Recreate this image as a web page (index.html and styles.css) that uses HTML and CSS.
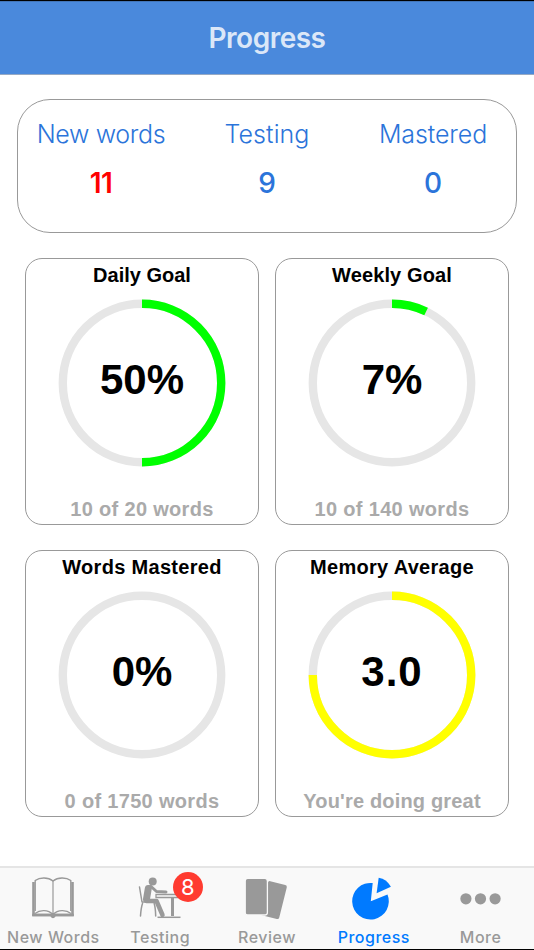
FILE: index.html
```html
<!DOCTYPE html>
<html lang="en">
<head>
<meta charset="utf-8">
<title>Progress</title>
<link rel="stylesheet" href="styles.css">
</head>
<body>
<div class="app">
  <header class="navbar"><h1>Progress</h1></header>
  <main>
    <section class="summary">
      <div class="stat"><span class="stat-label new">New words</span><span class="stat-value alert">11</span></div>
      <div class="stat"><span class="stat-label testing">Testing</span><span class="stat-value">9</span></div>
      <div class="stat"><span class="stat-label mastered">Mastered</span><span class="stat-value">0</span></div>
    </section>
    <section class="goals">
      <article class="card">
        <h2 class="daily">Daily Goal</h2>
        <div class="ring">
          <svg viewBox="0 0 168 168"><circle class="track" cx="84" cy="84" r="79.2"/><circle class="arc green" cx="84" cy="84" r="79.2" pathLength="100" stroke-dasharray="50 100"/></svg>
          <strong>50%</strong>
        </div>
        <p>10 of 20 words</p>
      </article>
      <article class="card">
        <h2 class="weekly">Weekly Goal</h2>
        <div class="ring">
          <svg viewBox="0 0 168 168"><circle class="track" cx="84" cy="84" r="79.2"/><circle class="arc green" cx="84" cy="84" r="79.2" pathLength="100" stroke-dasharray="7.1 100"/></svg>
          <strong>7%</strong>
        </div>
        <p>10 of 140 words</p>
      </article>
      <article class="card">
        <h2>Words Mastered</h2>
        <div class="ring">
          <svg viewBox="0 0 168 168"><circle class="track" cx="84" cy="84" r="79.2"/></svg>
          <strong>0%</strong>
        </div>
        <p>0 of 1750 words</p>
      </article>
      <article class="card">
        <h2>Memory Average</h2>
        <div class="ring">
          <svg viewBox="0 0 168 168"><circle class="track" cx="84" cy="84" r="79.2"/><circle class="arc yellow" cx="84" cy="84" r="79.2" pathLength="100" stroke-dasharray="75 100"/></svg>
          <strong class="decimal">3.0</strong>
        </div>
        <p class="great">You're doing great</p>
      </article>
    </section>
  </main>
  <nav class="tabs">
    <a class="tab">
      <svg viewBox="0 0 48 48"><path d="M4.500 7V40H43.500V7" fill="none" stroke="currentColor" stroke-width="2.600"/><path d="M6.200 36V5.500C11 2 19 2 24 6C29 2 37 2 41.800 5.500V36" fill="#f9f9f9" stroke="currentColor" stroke-width="1.400"/><path d="M6 38.500C11 34.500 19 34.500 24 39.500C29 34.500 37 34.500 42 38.500M24 6V40" fill="none" stroke="currentColor" stroke-width="1.200"/><path d="M3.200 38.800H44.800V41.300H26.700Q24 45 21.300 41.300H3.200Z" fill="currentColor"/></svg>
      <span>New Words</span>
    </a>
    <a class="tab">
      <svg viewBox="0 0 48 48"><g fill="none" stroke="currentColor" stroke-linecap="round" stroke-linejoin="round"><path d="M3.500 12L6 27H19M6.500 28.500Q5 33 4.500 41M18.200 28.500Q19.500 33 19.700 41" stroke-width="1.500"/><path d="M12.300 13.500L10.500 24" stroke-width="7"/><path d="M14.500 11L20.500 16.500L30 17" stroke-width="3"/><path d="M10.500 26H20.500L26.500 40" stroke-width="4.500"/></g><circle cx="16.700" cy="6.500" r="4" fill="currentColor"/><path d="M20 19.500H43V22.500H20Z" fill="#f9f9f9" stroke="currentColor" stroke-width="1.300"/><path d="M36.500 23V41" stroke="currentColor" stroke-width="3"/><path d="M21.500 42.300H44.500" stroke="currentColor" stroke-width="1.500"/></svg>
      <b class="badge">8</b>
      <span>Testing</span>
    </a>
    <a class="tab">
      <svg viewBox="0 0 48 48"><rect x="20.800" y="7.500" width="19.500" height="35" rx="2" transform="rotate(14 30.300 25)" fill="currentColor"/><rect x="2.200" y="3.400" width="22.200" height="36.600" rx="2.500" fill="currentColor" stroke="#f9f9f9" stroke-width="1.300"/></svg>
      <span>Review</span>
    </a>
    <a class="tab active">
      <svg viewBox="0 0 48 48"><path d="M20.800 26.200L22.700 8.100A18.300 18.300 0 1 0 37.500 19.500Z" fill="currentColor"/><path d="M26.600 18.200L28.700 2.800Q36.500 4 40.900 11.700Z" fill="currentColor"/></svg>
      <span>Progress</span>
    </a>
    <a class="tab">
      <svg viewBox="0 0 48 48"><g fill="currentColor"><circle cx="8.900" cy="23.800" r="5.600"/><circle cx="23.500" cy="23.800" r="5.600"/><circle cx="38.100" cy="23.800" r="5.600"/></g></svg>
      <span>More</span>
    </a>
  </nav>
</div>
</body>
</html>
```
FILE: styles.css
```css
* { box-sizing: border-box; }
body { margin: 0; background: #fff; font-family: Inter, "Liberation Sans", sans-serif; }
h1, h2, p { margin: 0; }
.app { width: 534px; height: 950px; display: flex; flex-direction: column; border-top: 1px solid #000; border-bottom: 1px solid #000; overflow: hidden; }
.navbar { height: 74px; flex: none; display: flex; justify-content: center; background: #4a89dc; border-top: 1px solid #4275b8; border-bottom: 1px solid #96a9c4; }
.navbar h1 { font-size: 28px; font-weight: 600; line-height: 34px; margin-top: 19px; color: #dbe7f8; letter-spacing: -.5px; }
main { flex: 1; padding: 24px 17px 0; }
.summary { height: 134px; display: grid; grid-template-columns: repeat(3, 1fr); border: 1px solid #999; border-radius: 33px; }
.stat { display: flex; flex-direction: column; align-items: center; padding-top: 18px; color: #2b74da; }
.stat-label { font-size: 25px; line-height: 32px; font-weight: 300; white-space: nowrap; }
.new { letter-spacing: -.35px; }
.testing { letter-spacing: .1px; }
.mastered { letter-spacing: -.1px; }
.stat-value { font-size: 28px; line-height: 34px; font-weight: 550; margin-top: 16px; }
.alert { color: #f00; font-weight: 600; letter-spacing: -.5px; }
.goals { display: grid; grid-template-columns: 234px 234px; gap: 25px 16px; padding: 25px 8px 0; }
.card { height: 267px; display: flex; flex-direction: column; align-items: center; border: 1px solid #999; border-radius: 17px; font-family: "Liberation Sans", sans-serif; }
.card h2 { font-size: 20px; line-height: 24px; font-weight: 700; margin-top: 4px; color: #000; letter-spacing: .3px; white-space: nowrap; }
.card .daily { letter-spacing: 0; }
.card .weekly { letter-spacing: .12px; }
.ring { display: grid; width: 168px; height: 168px; margin-top: 12px; place-items: center; }
.ring > * { grid-area: 1 / 1; }
.ring svg { width: 168px; height: 168px; transform: rotate(-90deg); }
.ring strong { font-size: 42px; line-height: 48px; margin-bottom: 6px; }
.ring .decimal { letter-spacing: 1px; }
.track, .arc { fill: none; stroke-width: 8.4; }
.track { stroke: #e6e6e6; }
.green { stroke: #0f0; }
.yellow { stroke: #ff0; }
.card p { font-size: 20px; line-height: 24px; font-weight: 700; color: #aaa; margin-top: 30px; letter-spacing: .32px; white-space: nowrap; }
.card .great { letter-spacing: .17px; }
.tabs { height: 83px; flex: none; display: grid; grid-template-columns: repeat(5, 1fr); background: #f9f9f9; border-top: 2px solid #e5e5e5; }
.tab { position: relative; display: flex; flex-direction: column; align-items: center; color: #999; padding-top: 7px; }
.tab svg { width: 48px; height: 48px; }
.tab span { font-size: 16px; line-height: 20px; font-weight: 500; margin-top: 4px; letter-spacing: .5px; white-space: nowrap; }
.active { color: #007aff; }
.badge { position: absolute; left: 66px; top: 4px; width: 30px; height: 30px; border-radius: 50%; background: #ff3b30; color: #fff; font-size: 22px; line-height: 30px; font-weight: 400; text-align: center; }
```
